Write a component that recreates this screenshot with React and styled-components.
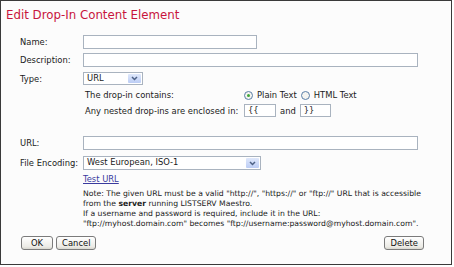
import React from "react";
import styled, { createGlobalStyle } from "styled-components";

const Global = createGlobalStyle`
  html, body { margin: 0; padding: 0; background: #ffffff; }
  body { font-family: "DejaVu Sans", Verdana, sans-serif; }
`;

const Frame = styled.div`
  box-sizing: border-box;
  width: 452px;
  height: 265px;
  border: 1px solid #3a3a3a;
  background: #fcfcfc;
  display: flex;
  flex-direction: column;
  font-size: 8.4px;
  color: #1a1a1a;
`;

const Title = styled.h1`
  margin: 0;
  padding: 6px 0 0 5px;
  height: 19px;
  box-sizing: border-box;
  font-size: 11.8px;
  font-weight: normal;
  line-height: 16px;
  color: #c8143c;
`;

const Form = styled.div`
  display: grid;
  grid-template-columns: 63px 1fr;
  align-items: center;
  padding: 15px 0 0 19px;
`;

const Label = styled.div`
  margin-top: ${(p) => p.$mt || 0}px;
  white-space: nowrap;
`;

const Field = styled.div`
  margin-top: ${(p) => p.$mt || 0}px;
  display: flex;
  align-items: center;
  ${(p) => p.$col2 && "grid-column: 2;"}
`;

const TextInput = styled.div`
  box-sizing: border-box;
  width: ${(p) => p.$w}px;
  height: ${(p) => p.$h || 14}px;
  border: 1px solid #a9b3bf;
  background: #ffffff;
  padding: 0 3px;
  line-height: ${(p) => (p.$h || 14) - 2}px;
`;

const Select = styled.div`
  box-sizing: border-box;
  width: ${(p) => p.$w}px;
  height: ${(p) => p.$h || 13}px;
  border: 1px solid #a9b3bf;
  background: #ffffff;
  display: flex;
  align-items: stretch;
`;

const SelectText = styled.span`
  flex: 1;
  padding-left: 3px;
  line-height: 11px;
`;

const ArrowBox = styled.span`
  width: 13px;
  margin: 1px;
  background: linear-gradient(#dfe8fb, #bccdf5);
  border-radius: 1px;
  display: flex;
  align-items: center;
  justify-content: center;
`;

const SubGrid = styled.div`
  grid-column: 2;
  display: grid;
  grid-template-columns: 159px auto;
  align-items: center;
  padding-left: 2px;
  margin-top: ${(p) => p.$mt || 0}px;
`;

const SubText = styled.span`
  margin-top: ${(p) => p.$mt || 0}px;
`;

const RadioGroup = styled.div`
  display: flex;
  align-items: center;
`;

const Radio = styled.span`
  box-sizing: border-box;
  width: 9px;
  height: 9px;
  border-radius: 50%;
  border: 1px solid #5a7fa8;
  background: #f4f4f0;
  display: inline-flex;
  align-items: center;
  justify-content: center;
  margin-right: 4px;
  margin-left: ${(p) => p.$ml || 0}px;
  &::after {
    content: "";
    width: 3px;
    height: 3px;
    border-radius: 50%;
    background: ${(p) => (p.$checked ? "#3fa53a" : "transparent")};
  }
`;

const And = styled.span`
  margin: 0 4px;
`;

const LinkText = styled.a`
  color: #3a3a9e;
  text-decoration: underline;
  cursor: pointer;
`;

const Note = styled.div`
  grid-column: 2;
  margin-top: 5px;
  font-size: 7.7px;
  line-height: 10px;
  white-space: nowrap;
`;

const Footer = styled.div`
  margin-top: auto;
  padding: 0 27px 14px 20px;
  display: flex;
  align-items: center;
`;

const Button = styled.button`
  box-sizing: border-box;
  height: 14px;
  padding: 0 ${(p) => p.$px || 6}px;
  margin-right: 3px;
  border: 1px solid #7b7b7b;
  border-radius: 3px;
  background: linear-gradient(#ffffff, #ecebe6 80%, #d9d8d0);
  font-family: "DejaVu Sans", Verdana, sans-serif;
  font-size: 8.4px;
  line-height: 12px;
  color: #111;
  ${(p) => p.$right && "margin-left: auto; margin-right: 0;"}
`;

const Chevron = () => (
  <svg width="7" height="5" viewBox="0 0 7 5">
    <path d="M1 1 L3.5 3.5 L6 1" fill="none" stroke="#4d6185" strokeWidth="1.5" />
  </svg>
);

export default function App() {
  return (
    <>
      <Global />
      <Frame>
        <Title>Edit Drop-In Content Element</Title>
        <Form>
          <Label>Name:</Label>
          <Field>
            <TextInput $w={174} />
          </Field>
          <Label $mt={4}>Description:</Label>
          <Field $mt={4}>
            <TextInput $w={335} />
          </Field>
          <Label $mt={5}>Type:</Label>
          <Field $mt={5}>
            <Select $w={60}>
              <SelectText>URL</SelectText>
              <ArrowBox>
                <Chevron />
              </ArrowBox>
            </Select>
          </Field>
          <SubGrid $mt={5}>
            <SubText>The drop-in contains:</SubText>
            <RadioGroup>
              <Radio $checked />
              <span>Plain Text</span>
              <Radio $ml={4} />
              <span>HTML Text</span>
            </RadioGroup>
            <SubText $mt={4}>Any nested drop-ins are enclosed in:</SubText>
            <Field $mt={4}>
              <TextInput $w={32} $h={13}>{"{{"}</TextInput>
              <And>and</And>
              <TextInput $w={31} $h={13}>{"}}"}</TextInput>
            </Field>
          </SubGrid>
          <Label $mt={19}>URL:</Label>
          <Field $mt={19}>
            <TextInput $w={335} />
          </Field>
          <Label $mt={6}>File Encoding:</Label>
          <Field $mt={6}>
            <Select $w={178} $h={14}>
              <SelectText>West European, ISO-1</SelectText>
              <ArrowBox>
                <Chevron />
              </ArrowBox>
            </Select>
          </Field>
          <Field $mt={4} $col2>
            <LinkText>Test URL</LinkText>
          </Field>
          <Note>
            Note: The given URL must be a valid "http://", "https://" or "ftp://" URL that is accessible
            <br />
            from the <b>server</b> running LISTSERV Maestro.
            <br />
            If a username and password is required, include it in the URL:
            <br />
            "ftp://myhost.domain.com" becomes "ftp://username:password@myhost.domain.com".
          </Note>
        </Form>
        <Footer>
          <Button $px={9}>OK</Button>
          <Button $px={5}>Cancel</Button>
          <Button $right $px={5}>Delete</Button>
        </Footer>
      </Frame>
    </>
  );
}
